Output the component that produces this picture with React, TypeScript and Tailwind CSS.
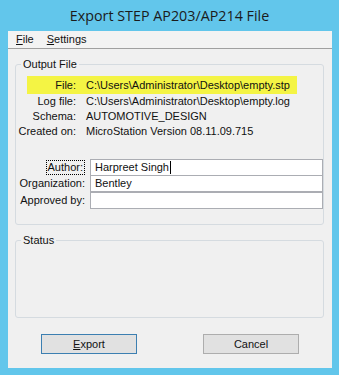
import React from 'react'

const ui = { fontFamily: '"Liberation Sans", Arial, sans-serif' }

function InfoRow({ label, value }: { label: string; value: string }) {
  return (
    <div className="flex h-[15px] items-center">
      <div className="w-[60px] text-right">{label}</div>
      <div className="ml-[10px] whitespace-nowrap">{value}</div>
    </div>
  )
}

function Field({ label, value, focused, caret, className = '' }: { label: string; value?: string; focused?: boolean; caret?: boolean; className?: string }) {
  return (
    <div className={`flex items-center ${className}`}>
      <div className="flex w-[70px] justify-end pr-px">
        <span className={focused ? 'border border-dotted border-black px-px leading-[13px]' : 'leading-[13px]'}>{label}</span>
      </div>
      <div className="ml-[4px] flex h-[17px] flex-1 items-center border border-[#abadb3] bg-white pl-[4px]">
        {value}
        {caret && <span className="ml-px inline-block h-[13px] w-px bg-black" />}
      </div>
    </div>
  )
}

export default function App() {
  return (
    <div className="flex h-[375px] w-[339px] flex-col bg-[#62c6eb] text-[11px] text-[#111]" style={ui}>
      {/* Title bar */}
      <div className="flex h-[31px] items-center justify-center pt-px text-[14.3px] text-[#1b1b1b]" style={{ fontFamily: '"Open Sans", "Noto Sans", sans-serif' }}>
        Export STEP AP203/AP214 File
      </div>

      {/* Client */}
      <div className="ml-[8px] flex h-[337px] w-[324px] flex-col bg-[#f0f0f0]">
        {/* Menu */}
        <div className="flex h-[18px] items-center gap-[13px] border-b border-[#a0a0a0] bg-[#f3f3f3] pl-[8px] text-[11px]">
          <span><u>F</u>ile</span>
          <span><u>S</u>ettings</span>
        </div>

        {/* Output File */}
        <fieldset className="ml-[7px] mt-[8px] w-[309px] rounded-[3px] border border-[#d5dbe0] pb-[15px]">
          <legend className="ml-[5px] px-[2px] leading-[14px]">Output File</legend>
          <div className="mt-[5px] flex h-[18px] w-[270px] ml-[11px] items-center bg-[#f4f444]">
            <div className="w-[49px] text-right">File:</div>
            <div className="ml-[10px] whitespace-nowrap">C:\Users\Administrator\Desktop\empty.stp</div>
          </div>
          <InfoRow label="Log file:" value="C:\Users\Administrator\Desktop\empty.log" />
          <InfoRow label="Schema:" value="AUTOMOTIVE_DESIGN" />
          <InfoRow label="Created on:" value="MicroStation Version 08.11.09.715" />

          <div className="mt-[20px] flex flex-col">
            <Field label="Author:" value="Harpreet Singh" focused caret />
            <Field label="Organization:" value="Bentley" className="-mt-px" />
            <Field label="Approved by:" />
          </div>
        </fieldset>

        {/* Status */}
        <fieldset className="ml-[7px] mt-[8px] w-[309px] rounded-[3px] border border-[#d5dbe0]">
          <legend className="ml-[5px] px-[2px] leading-[14px]">Status</legend>
          <div className="h-[70px]" />
        </fieldset>

        {/* Buttons */}
        <div className="mt-[16px] flex">
          <button className="ml-[33px] flex h-[20px] w-[96px] items-center justify-center border border-[#3c7fb1] bg-[#e1e1e1]">
            <span><u>E</u>xport</span>
          </button>
          <button className="ml-[66px] flex h-[20px] w-[96px] items-center justify-center border border-[#adadad] bg-[#e1e1e1]">
            Cancel
          </button>
        </div>
      </div>
    </div>
  )
}
